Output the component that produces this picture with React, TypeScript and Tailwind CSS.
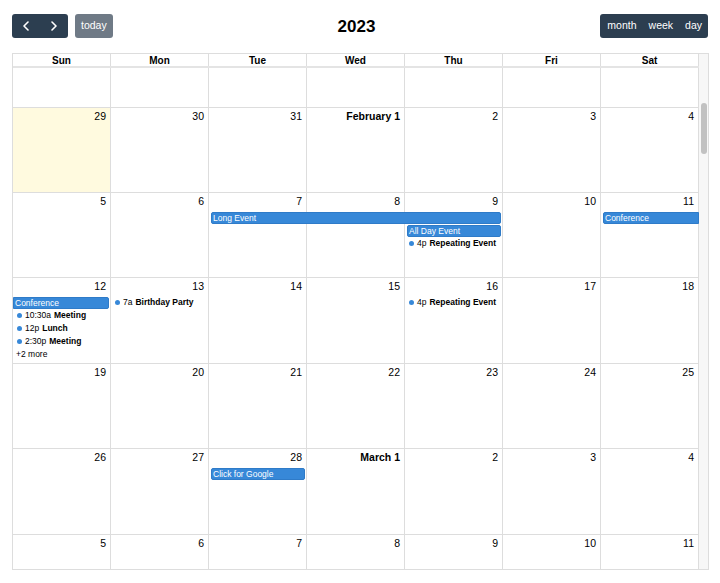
import React from "react";

type Day = { n: string; today?: boolean; bold?: boolean };
type Bar = { col: number; span: number; slot: number; title: string; contL?: boolean; contR?: boolean };
type Item = { col: number; slot: number; time?: string; title: string; more?: boolean };
type Week = { h: string; days: Day[]; bars: Bar[]; items: Item[] };

const DOW = ["Sun", "Mon", "Tue", "Wed", "Thu", "Fri", "Sat"];

const COL_START = ["col-start-1", "col-start-2", "col-start-3", "col-start-4", "col-start-5", "col-start-6", "col-start-7"];
const COL_SPAN = ["col-span-1", "col-span-2", "col-span-3"];
const ROW_START = ["row-start-2", "row-start-3", "row-start-4", "row-start-5", "row-start-6"];

const nums = (a: string[]): Day[] => a.map((n) => ({ n }));

const weeks: Week[] = [
  {
    h: "h-[85px]",
    days: [{ n: "29", today: true }, { n: "30" }, { n: "31" }, { n: "February 1", bold: true }, { n: "2" }, { n: "3" }, { n: "4" }],
    bars: [],
    items: [],
  },
  {
    h: "h-[85px]",
    days: nums(["5", "6", "7", "8", "9", "10", "11"]),
    bars: [
      { col: 3, span: 3, slot: 0, title: "Long Event" },
      { col: 5, span: 1, slot: 1, title: "All Day Event" },
      { col: 7, span: 1, slot: 0, title: "Conference", contR: true },
    ],
    items: [{ col: 5, slot: 2, time: "4p", title: "Repeating Event" }],
  },
  {
    h: "h-[86px]",
    days: nums(["12", "13", "14", "15", "16", "17", "18"]),
    bars: [{ col: 1, span: 1, slot: 0, title: "Conference", contL: true }],
    items: [
      { col: 1, slot: 1, time: "10:30a", title: "Meeting" },
      { col: 1, slot: 2, time: "12p", title: "Lunch" },
      { col: 1, slot: 3, time: "2:30p", title: "Meeting" },
      { col: 1, slot: 4, title: "+2 more", more: true },
      { col: 2, slot: 0, time: "7a", title: "Birthday Party" },
      { col: 5, slot: 0, time: "4p", title: "Repeating Event" },
    ],
  },
  {
    h: "h-[85px]",
    days: nums(["19", "20", "21", "22", "23", "24", "25"]),
    bars: [],
    items: [],
  },
  {
    h: "h-[86px]",
    days: [{ n: "26" }, { n: "27" }, { n: "28" }, { n: "March 1", bold: true }, { n: "2" }, { n: "3" }, { n: "4" }],
    bars: [{ col: 3, span: 1, slot: 0, title: "Click for Google" }],
    items: [],
  },
];

function ChevronLeft() {
  return (
    <svg width="6" height="10" viewBox="0 0 6 10" fill="none">
      <path d="M5 1 1 5l4 4" stroke="white" strokeWidth="1.6" strokeLinecap="round" strokeLinejoin="round" />
    </svg>
  );
}

function ChevronRight() {
  return (
    <svg width="6" height="10" viewBox="0 0 6 10" fill="none">
      <path d="m1 1 4 4-4 4" stroke="white" strokeWidth="1.6" strokeLinecap="round" strokeLinejoin="round" />
    </svg>
  );
}

function DayNumber({ day }: { day: Day }) {
  return (
    <div className={`pr-[4px] pt-[2px] text-right text-[10.5px] leading-[12px] text-black ${day.bold ? "font-bold" : ""}`}>
      {day.n}
    </div>
  );
}

function WeekRow({ week }: { week: Week }) {
  return (
    <div className={`grid grid-cols-[repeat(7,98px)] grid-rows-[19px_13px_13px_13px_13px_13px_1fr] ${week.h}`}>
      {week.days.map((d, i) => (
        <div
          key={i}
          className={`row-span-full border-r border-b border-[#ddd] ${COL_START[i]} ${d.today ? "bg-[#fffadf]" : ""}`}
        >
          <DayNumber day={d} />
        </div>
      ))}
      {week.bars.map((b, i) => (
        <div
          key={"b" + i}
          className={`${COL_START[b.col - 1]} ${COL_SPAN[b.span - 1]} ${ROW_START[b.slot]} h-[12px] self-start border border-[#2f7bc8] bg-[#3788d8] pl-[1px] text-[8.5px] leading-[10px] text-white ${
            b.contL ? "ml-0 rounded-l-none" : "ml-[2px] rounded-l-[2px]"
          } ${b.contR ? "mr-0 rounded-r-none" : "mr-[2px] rounded-r-[2px]"}`}
        >
          {b.title}
        </div>
      ))}
      {week.items.map((it, i) =>
        it.more ? (
          <div key={"i" + i} className={`${COL_START[it.col - 1]} ${ROW_START[it.slot]} pl-[3px] text-[8.5px] leading-[11px] text-black`}>
            {it.title}
          </div>
        ) : (
          <div
            key={"i" + i}
            className={`${COL_START[it.col - 1]} ${ROW_START[it.slot]} flex items-center gap-[3px] self-start pl-[4px] h-[11px] text-[8.5px] text-black`}
          >
            <span className="h-[5px] w-[5px] rounded-full bg-[#3788d8]" />
            <span>{it.time}</span>
            <span className="font-bold">{it.title}</span>
          </div>
        )
      )}
    </div>
  );
}

export default function App() {
  return (
    <div className="h-[583px] w-[720px] bg-white pl-[12px] pt-[14px] font-['Liberation_Sans',Arial,sans-serif] text-black">
      {/* toolbar */}
      <div className="flex h-[24px] w-[697px] items-center justify-between pr-[1px]">
        <div className="flex items-center gap-[7px]">
          <div className="flex h-[24px] overflow-hidden rounded-[3px] bg-[#2c3e50]">
            <button className="flex w-[28px] items-center justify-center">
              <ChevronLeft />
            </button>
            <button className="flex w-[28px] items-center justify-center">
              <ChevronRight />
            </button>
          </div>
          <button className="h-[24px] rounded-[3px] bg-[#6f7a86] px-[6px] text-[10.5px] text-white">today</button>
        </div>
        <h2 className="pt-[2px] text-[17px] font-bold">2023</h2>
        <div className="flex h-[24px] overflow-hidden rounded-[3px] bg-[#2c3e50] text-[10.5px] text-white">
          <button className="pl-[7px] pr-[6px]">month</button>
          <button className="px-[6px]">week</button>
          <button className="px-[6px]">day</button>
        </div>
      </div>

      {/* month grid */}
      <div className="mt-[15px] flex w-[697px] border border-[#ddd]">
        <div className="w-[686px]">
          <div className="grid h-[14px] grid-cols-[repeat(7,98px)] border-b-2 border-[#e4e4e4]">
            {DOW.map((d) => (
              <div key={d} className="border-r border-[#ddd] pt-[1px] text-center text-[10px] font-bold leading-[11px]">
                {d}
              </div>
            ))}
          </div>
          <div className="grid h-[40px] grid-cols-[repeat(7,98px)]">
            {DOW.map((d) => (
              <div key={d} className="border-r border-b border-[#ddd]" />
            ))}
          </div>
          {weeks.map((w, i) => (
            <WeekRow key={i} week={w} />
          ))}
          <div className="grid h-[34px] grid-cols-[repeat(7,98px)]">
            {["5", "6", "7", "8", "9", "10", "11"].map((n) => (
              <div key={n} className="border-r border-[#ddd]">
                <DayNumber day={{ n }} />
              </div>
            ))}
          </div>
        </div>
        {/* scrollbar */}
        <div className="flex-1 bg-[#f7f7f7]">
          <div className="ml-[2px] mt-[49px] h-[51px] w-[6px] rounded-full bg-[#c1c1c1]" />
        </div>
      </div>
    </div>
  );
}
